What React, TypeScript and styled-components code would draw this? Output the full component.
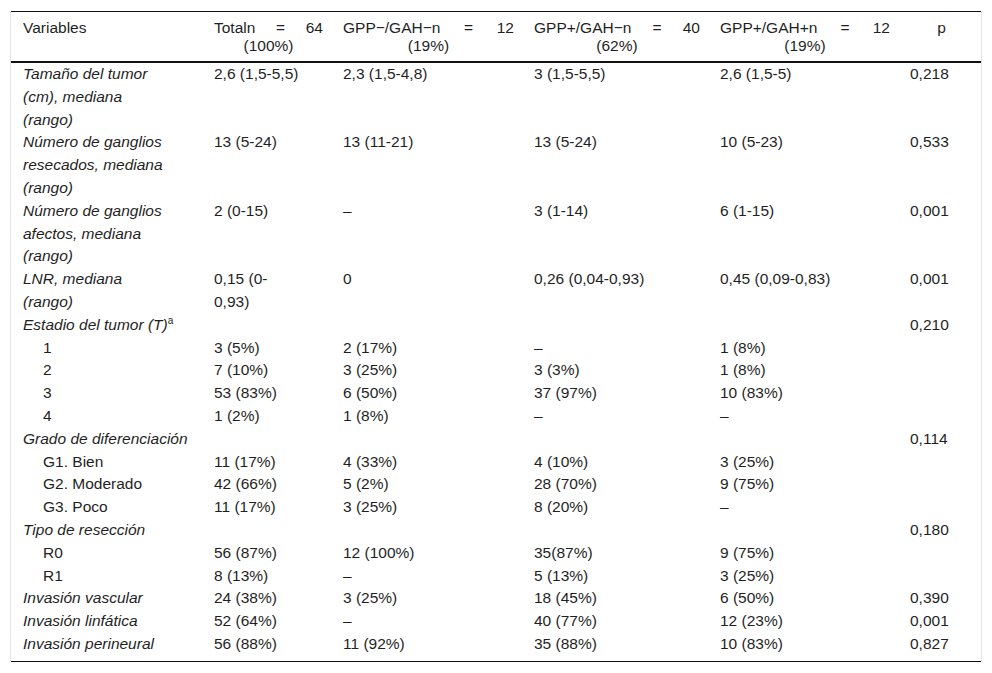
import React from "react";
import styled, { createGlobalStyle } from "styled-components";

const GlobalStyle = createGlobalStyle`
  html, body {
    margin: 0;
    padding: 0;
    background: #fff;
  }
  body {
    font-family: "Liberation Sans", Arial, Helvetica, sans-serif;
    color: #1f1f1f;
  }
`;

const Wrapper = styled.div`
  margin: 11px 10px 0 10px;
  border-left: 1px solid #e4e4e4;
  border-right: 1px solid #e4e4e4;
`;

const Table = styled.table`
  width: 100%;
  border-collapse: collapse;
  table-layout: fixed;
  font-size: 15.5px;
  border-top: 1px solid #111;
  border-bottom: 1px solid #111;
`;

const HeadRow = styled.tr`
  border-bottom: 2px solid #111;
`;

const Th = styled.th<{ $align?: "left" | "justify" | "center" }>`
  font-weight: normal;
  vertical-align: top;
  line-height: 17.5px;
  padding: 7px 8px 7px 12px;
  text-align: ${(p) => p.$align || "left"};
  text-align-last: ${(p) => (p.$align === "justify" ? "center" : "auto")};
`;

const Td = styled.td<{ $italic?: boolean; $indent?: boolean }>`
  vertical-align: top;
  line-height: 22.8px;
  padding: 0 30px 0 ${(p) => (p.$indent ? "32px" : "12px")};
  font-style: ${(p) => (p.$italic ? "italic" : "normal")};
  tr:last-child > & {
    padding-bottom: 5px;
  }
`;

const Sup = styled.sup`
  font-size: 10px;
  font-style: normal;
  vertical-align: top;
  line-height: 1;
  position: relative;
  top: 2px;
`;

type Row = {
  label: React.ReactNode;
  kind: "var" | "section" | "sub";
  cells: string[];
  p: string;
};

const rows: Row[] = [
  { label: "Tamaño del tumor (cm), mediana (rango)", kind: "var", cells: ["2,6 (1,5-5,5)", "2,3 (1,5-4,8)", "3 (1,5-5,5)", "2,6 (1,5-5)"], p: "0,218" },
  { label: "Número de ganglios resecados, mediana (rango)", kind: "var", cells: ["13 (5-24)", "13 (11-21)", "13 (5-24)", "10 (5-23)"], p: "0,533" },
  { label: "Número de ganglios afectos, mediana (rango)", kind: "var", cells: ["2 (0-15)", "–", "3 (1-14)", "6 (1-15)"], p: "0,001" },
  { label: "LNR, mediana (rango)", kind: "var", cells: ["0,15 (0-0,93)", "0", "0,26 (0,04-0,93)", "0,45 (0,09-0,83)"], p: "0,001" },
  { label: <>Estadio del tumor (T)<Sup>a</Sup></>, kind: "section", cells: [], p: "0,210" },
  { label: "1", kind: "sub", cells: ["3 (5%)", "2 (17%)", "–", "1 (8%)"], p: "" },
  { label: "2", kind: "sub", cells: ["7 (10%)", "3 (25%)", "3 (3%)", "1 (8%)"], p: "" },
  { label: "3", kind: "sub", cells: ["53 (83%)", "6 (50%)", "37 (97%)", "10 (83%)"], p: "" },
  { label: "4", kind: "sub", cells: ["1 (2%)", "1 (8%)", "–", "–"], p: "" },
  { label: "Grado de diferenciación", kind: "section", cells: [], p: "0,114" },
  { label: "G1. Bien", kind: "sub", cells: ["11 (17%)", "4 (33%)", "4 (10%)", "3 (25%)"], p: "" },
  { label: "G2. Moderado", kind: "sub", cells: ["42 (66%)", "5 (2%)", "28 (70%)", "9 (75%)"], p: "" },
  { label: "G3. Poco", kind: "sub", cells: ["11 (17%)", "3 (25%)", "8 (20%)", "–"], p: "" },
  { label: "Tipo de resección", kind: "section", cells: [], p: "0,180" },
  { label: "R0", kind: "sub", cells: ["56 (87%)", "12 (100%)", "35(87%)", "9 (75%)"], p: "" },
  { label: "R1", kind: "sub", cells: ["8 (13%)", "–", "5 (13%)", "3 (25%)"], p: "" },
  { label: "Invasión vascular", kind: "var", cells: ["24 (38%)", "3 (25%)", "18 (45%)", "6 (50%)"], p: "0,390" },
  { label: "Invasión linfática", kind: "var", cells: ["52 (64%)", "–", "40 (77%)", "12 (23%)"], p: "0,001" },
  { label: "Invasión perineural", kind: "var", cells: ["56 (88%)", "11 (92%)", "35 (88%)", "10 (83%)"], p: "0,827" },
];

export default function App() {
  return (
    <>
      <GlobalStyle />
      <Wrapper>
        <Table>
          <colgroup>
            <col style={{ width: 191 }} />
            <col style={{ width: 129 }} />
            <col style={{ width: 191 }} />
            <col style={{ width: 186 }} />
            <col style={{ width: 190 }} />
            <col />
          </colgroup>
          <thead>
            <HeadRow>
              <Th>Variables</Th>
              <Th $align="justify">Totaln = 64 (100%)</Th>
              <Th $align="justify">GPP−/GAH−n = 12 (19%)</Th>
              <Th $align="justify">GPP+/GAH−n = 40 (62%)</Th>
              <Th $align="justify">GPP+/GAH+n = 12 (19%)</Th>
              <Th $align="center">p</Th>
            </HeadRow>
          </thead>
          <tbody>
            {rows.map((r, i) =>
              r.kind === "section" ? (
                <tr key={i}>
                  <Td $italic colSpan={5}>{r.label}</Td>
                  <Td>{r.p}</Td>
                </tr>
              ) : (
                <tr key={i}>
                  <Td $italic={r.kind === "var"} $indent={r.kind === "sub"}>
                    {r.label}
                  </Td>
                  {r.cells.map((c, j) => (
                    <Td key={j}>{c}</Td>
                  ))}
                  <Td>{r.p}</Td>
                </tr>
              )
            )}
          </tbody>
        </Table>
      </Wrapper>
    </>
  );
}
